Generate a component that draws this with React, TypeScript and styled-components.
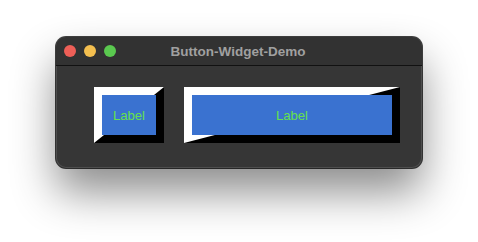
import styled, { createGlobalStyle } from "styled-components";

const GlobalStyle = createGlobalStyle`
  html, body {
    margin: 0;
    padding: 0;
    background: #ffffff;
  }
  body {
    font-family: "Liberation Sans", Arial, sans-serif;
  }
`;

// 바깥 페이지 (창 위치용 여백)
const Page = styled.div`
  width: 478px;
  height: 242px;
  box-sizing: border-box;
  padding: 37px 56px;
`;

// 맥 스타일 창
const Window = styled.div`
  width: 366px;
  height: 131px;
  border-radius: 10px;
  background-color: #363636;
  overflow: hidden;
  display: flex;
  flex-direction: column;
  box-shadow: 0 0 0 1px rgba(0, 0, 0, 0.75), inset 0 0 0 1px rgba(255, 255, 255, 0.12),
    0 24px 44px rgba(0, 0, 0, 0.45);
`;

const TitleBar = styled.div`
  height: 28px;
  flex-shrink: 0;
  display: flex;
  align-items: center;
  position: relative;
  background-color: #323232;
  border-bottom: 1px solid #111;
  padding-left: 8px;
  gap: 8px;
`;

const Light = styled.span<{ $color: string }>`
  width: 12px;
  height: 12px;
  border-radius: 50%;
  background-color: ${(p) => p.$color};
`;

const Title = styled.div`
  position: absolute;
  left: 0;
  right: 0;
  padding-right: 2px;
  text-align: center;
  font-size: 13.5px;
  font-weight: bold;
  color: #a0a0a0;
  pointer-events: none;
`;

const Content = styled.div`
  flex: 1;
  display: flex;
  align-items: flex-start;
  gap: 20px;
  padding: 21px 22px 0 38px;
`;

// 입체 테두리 버튼 (흰색 좌상단, 검정 우하단)
const BevelButton = styled.div<{ $width: number }>`
  position: relative;
  width: ${(p) => p.$width}px;
  height: 56px;
  background-color: #000;
  padding: 8px;
  box-sizing: border-box;
  display: flex;

  &::before {
    content: "";
    position: absolute;
    inset: 0;
    background-color: #fff;
    clip-path: polygon(0 0, 100% 0, 50% 50%, 0 100%);
  }
`;

const Face = styled.div`
  position: relative;
  flex: 1;
  background-color: #3a72d0;
  color: #66e04c;
  font-size: 13px;
  display: flex;
  align-items: center;
  justify-content: center;
`;

export default function App() {
  return (
    <Page>
      <GlobalStyle />
      <Window>
        <TitleBar>
          <Light $color="#ee5f57" />
          <Light $color="#f4bf4f" />
          <Light $color="#5ac94f" />
          <Title>Button-Widget-Demo</Title>
        </TitleBar>
        <Content>
          <BevelButton $width={70}>
            <Face>Label</Face>
          </BevelButton>
          <BevelButton $width={216}>
            <Face>Label</Face>
          </BevelButton>
        </Content>
      </Window>
    </Page>
  );
}
